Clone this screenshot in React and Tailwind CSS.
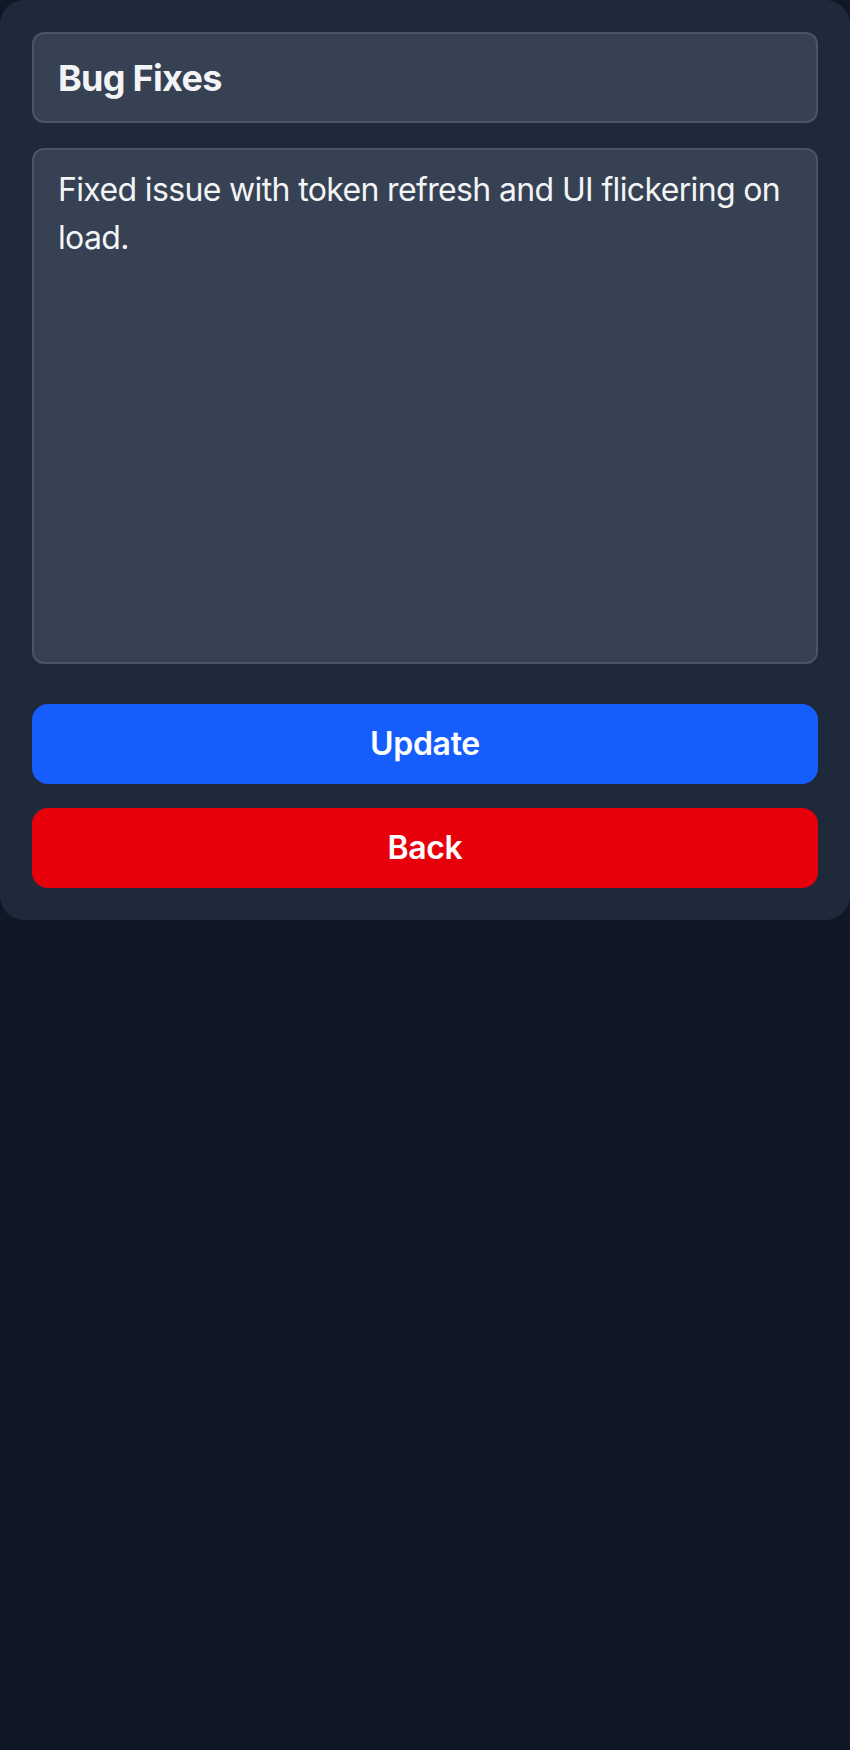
import React, { useState } from "react";

// Edit form for a changelog entry
export default function App() {
  const [title, setTitle] = useState("Bug Fixes");
  const [body, setBody] = useState(
    "Fixed issue with token refresh and UI flickering on load."
  );

  return (
    <div
      className="min-h-[1750px] bg-gray-900"
      style={{ fontFamily: "Inter, 'Noto Sans', sans-serif" }}
    >
      <div className="flex flex-col rounded-[24px] bg-gray-800 p-8">
        {/* Title */}
        <input
          className="h-[91px] w-full rounded-[12px] border-2 border-gray-600 bg-gray-700 px-6 text-[36px] font-bold tracking-[-0.02em] text-gray-100 outline-none"
          value={title}
          onChange={(e) => setTitle(e.target.value)}
        />

        {/* Body */}
        <textarea
          className="mt-[25px] h-[516px] w-full resize-none rounded-[12px] border-2 border-gray-600 bg-gray-700 px-6 py-4 text-[32px] leading-[48px] tracking-[-0.02em] text-gray-100 outline-none"
          value={body}
          onChange={(e) => setBody(e.target.value)}
        />

        {/* Actions */}
        <button className="mt-10 h-20 w-full rounded-[16px] bg-blue-600 text-[32px] font-semibold tracking-[-0.01em] text-white">
          Update
        </button>
        <button className="mt-6 h-20 w-full rounded-[16px] bg-red-600 text-[32px] font-semibold tracking-[-0.01em] text-white">
          Back
        </button>
      </div>
    </div>
  );
}
